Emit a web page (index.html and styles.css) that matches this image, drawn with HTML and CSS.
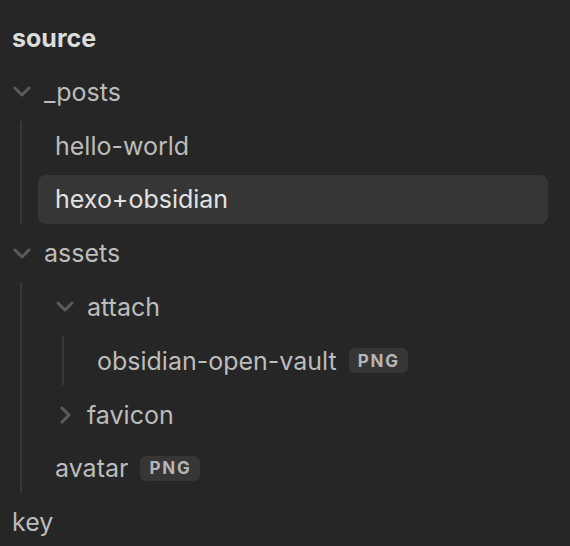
FILE: index.html
```html
<!DOCTYPE html>
<html>
<head>
<meta charset="utf-8">
<link rel="stylesheet" href="styles.css">
</head>
<body>
<div class="tree">
  <div class="row root-title">source</div>
  <div class="folder">
    <div class="row folder-title">
      <span class="chev"><svg width="18" height="11" viewBox="0 0 18 11"><path d="M2 2 L9 9 L16 2" /></svg></span>
      <span>_posts</span>
    </div>
    <div class="children lvl1">
      <div class="row file">hello-world</div>
      <div class="row file selected">hexo+obsidian</div>
    </div>
  </div>
  <div class="folder">
    <div class="row folder-title">
      <span class="chev"><svg width="18" height="11" viewBox="0 0 18 11"><path d="M2 2 L9 9 L16 2" /></svg></span>
      <span>assets</span>
    </div>
    <div class="children lvl1">
      <div class="folder">
        <div class="row folder-title inner">
          <span class="chev"><svg width="18" height="11" viewBox="0 0 18 11"><path d="M2 2 L9 9 L16 2" /></svg></span>
          <span>attach</span>
        </div>
        <div class="children lvl2">
          <div class="row file">obsidian-open-vault<span class="badge">PNG</span></div>
        </div>
      </div>
      <div class="row folder-title inner">
        <span class="chev"><svg width="11" height="18" viewBox="0 0 11 18"><path d="M2 2 L9 9 L2 16" /></svg></span>
        <span>favicon</span>
      </div>
      <div class="row file">avatar<span class="badge">PNG</span></div>
    </div>
  </div>
  <div class="row root-file">key</div>
</div>
</body>
</html>
```

FILE: styles.css
```css
html, body {
  margin: 0;
  padding: 0;
  background: #262626;
}
body {
  width: 570px;
  height: 546px;
  overflow: hidden;
  font-family: Inter, "Noto Sans", sans-serif;
  font-size: 25px;
  color: #bcbcbc;
}
.tree {
  display: flex;
  flex-direction: column;
  gap: 4.8px;
  padding: 13.5px 22px 0 0;
}
.folder {
  display: flex;
  flex-direction: column;
  gap: 4.8px;
}
.row {
  height: 49px;
  display: flex;
  align-items: center;
  border-radius: 8px;
  white-space: nowrap;
}
.root-title {
  padding-left: 12px;
  font-weight: 700;
  color: #dcdcdc;
}
.root-file {
  padding-left: 12px;
}
.folder-title {
  padding-left: 12px;
}
.folder-title.inner {
  padding-left: 17px;
}
.chev {
  width: 20px;
  margin-right: 12px;
  display: flex;
  justify-content: center;
  align-items: center;
}
.chev svg path {
  fill: none;
  stroke: #5b5b5b;
  stroke-width: 3;
  stroke-linecap: round;
  stroke-linejoin: round;
}
.children {
  display: flex;
  flex-direction: column;
  gap: 4.8px;
  border-left: 2px solid #383838;
  padding-left: 16px;
}
.children.lvl1 {
  margin-left: 20px;
}
.children.lvl2 {
  margin-left: 24px;
}
.file {
  padding-left: 17px;
}
.selected {
  background: #363636;
  color: #e2e2e2;
}
.badge {
  margin-left: 12px;
  height: 25px;
  padding: 0 8px 0 9px;
  border-radius: 6px;
  background: #363636;
  color: #b5b5b5;
  font-size: 17px;
  font-weight: 700;
  letter-spacing: 1.8px;
  display: flex;
  align-items: center;
}
```
